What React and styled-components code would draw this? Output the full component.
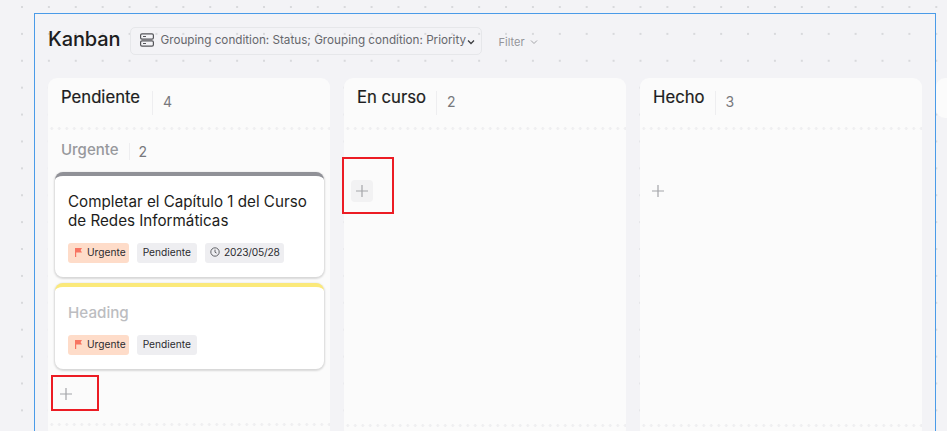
import React from 'react';
import styled, { createGlobalStyle } from 'styled-components';

const GlobalStyle = createGlobalStyle`
  html, body {
    margin: 0;
    height: 100%;
    overflow: hidden;
  }
  body {
    font-family: Inter, "Liberation Sans", sans-serif;
    background-color: #f3f3f6;
    background-image: radial-gradient(circle at 1px 1px, #d8d9dc 1px, transparent 1.3px);
    background-size: 26.9px 26.9px;
    background-position: 21px 6px;
  }
`;

const Page = styled.div`
  width: 947px;
  height: 431px;
  overflow: hidden;
  padding: 13px 0 0 34px;
  box-sizing: border-box;
`;

const Frame = styled.div`
  width: 902px;
  height: 440px;
  box-sizing: border-box;
  border: 1px solid #4a9be8;
  padding: 0 0 0 13px;
`;

const Toolbar = styled.div`
  display: flex;
  align-items: center;
  height: 53px;
  margin-bottom: 11px;
`;

const PageTitle = styled.h1`
  margin: 0 9px 0 0;
  font-size: 20px;
  line-height: 24px;
  font-weight: 500;
  letter-spacing: -0.1px;
  color: #1d1d20;
  position: relative;
  top: -2px;
`;

const GroupButton = styled.div`
  display: flex;
  align-items: center;
  width: 352px;
  height: 28px;
  box-sizing: border-box;
  padding: 0 0 1px 9px;
  border: 1px solid #e6e7ea;
  border-radius: 5px;
  font-size: 11.7px;
  color: #66676c;
  white-space: nowrap;
`;

const GroupIcon = styled.svg`
  width: 14px;
  height: 14px;
  margin-right: 7px;
  flex: none;
`;

const ButtonChevron = styled.span`
  display: flex;
  margin: 3px 0 0 1px;
`;

const FilterButton = styled.div`
  display: flex;
  align-items: center;
  margin-left: 17px;
  font-size: 11px;
  color: #94959a;
  gap: 5px;
  position: relative;
  top: 1px;
`;

const Board = styled.div`
  display: flex;
  align-items: flex-start;
  gap: 14px;
`;

const Column = styled.section`
  flex: none;
  width: 282px;
  height: ${({ $height }) => $height || 360}px;
  box-sizing: border-box;
  background: #fbfbfb;
  border-radius: 9px;
  overflow: hidden;
`;

const ColumnHead = styled.div`
  display: flex;
  align-items: flex-start;
  height: 49px;
  box-sizing: border-box;
  padding: 9px 0 0 13px;
`;

const ColumnName = styled.span`
  font-size: 16.7px;
  line-height: 20px;
  font-weight: 400;
  -webkit-text-stroke: 0.2px #1d1d20;
  color: #1d1d20;
`;

const Count = styled.span`
  margin: 4px 0 0 ${({ $gap }) => $gap || 10}px;
  padding: 1px 0 0 10px;
  height: 24px;
  border-left: 1px solid #eeeef0;
  font-size: 14px;
  line-height: 20px;
  color: #77787c;
  box-sizing: border-box;
`;

const DotRule = styled.div`
  height: 3px;
  margin-top: ${({ $top }) => $top || 0}px;
  background-image: radial-gradient(circle, #efeff1 1.3px, transparent 1.6px);
  background-size: 7.5px 3px;
`;

const GroupHead = styled.div`
  display: flex;
  align-items: flex-start;
  height: 42px;
  box-sizing: border-box;
  padding: 10px 0 0 13px;
`;

const GroupName = styled.span`
  font-size: 15px;
  line-height: 20px;
  font-weight: 500;
  color: #97989c;
`;

const GroupCount = styled(Count)`
  margin: 3px 0 0 10px;
  padding: 0 0 0 9px;
  height: 17px;
  line-height: 17px;
`;

const Cards = styled.div`
  display: flex;
  flex-direction: column;
  gap: 6px;
  padding: 0 6px 0 7px;
`;

const Card = styled.article`
  box-sizing: border-box;
  height: ${({ $height }) => $height}px;
  padding: 16px 13px 0;
  background: #fff;
  border-top: 4px solid ${({ $accent }) => $accent};
  border-radius: 8px;
  box-shadow: 0 1px 2px 1px rgba(0, 0, 0, 0.14);
`;

const CardTitle = styled.h3`
  margin: 0;
  font-size: 15.2px;
  line-height: 19px;
  color: ${({ $muted }) => ($muted ? '#bcbdc1' : '#1d1d20')};
  font-weight: ${({ $muted }) => ($muted ? 500 : 400)};
`;

const Tags = styled.div`
  display: flex;
  gap: 8px;
  margin-top: 13px;
`;

const Tag = styled.span`
  display: flex;
  align-items: center;
  gap: 4px;
  height: 20px;
  box-sizing: border-box;
  padding: 0 6px 3px;
  border-radius: 3px;
  font-size: 10.2px;
  color: #2b2b2f;
  background: #eeeef1;
`;

const UrgentTag = styled(Tag)`
  padding: 0 3px 3px 6px;
  background: #fedcc9;
`;

const DateTag = styled(Tag)`
  padding: 0 4px 3px 5px;
  letter-spacing: -0.2px;
`;

const AddButton = styled.button`
  display: flex;
  align-items: center;
  justify-content: center;
  width: 22px;
  height: 22px;
  padding: 0;
  border: 0;
  border-radius: 4px;
  background: ${({ $active }) => ($active ? '#f2f2f3' : 'transparent')};
`;

const AddSlot = styled.div`
  padding: ${({ $top }) => $top}px 0 0 7px;
`;

const AddHighlight = styled.div`
  position: absolute;
  box-sizing: border-box;
  border: 2px solid #ec1c24;
  left: ${({ $left }) => $left}px;
  top: ${({ $top }) => $top}px;
  width: ${({ $width }) => $width}px;
  height: ${({ $height }) => $height}px;
`;

const Plus = () => (
  <svg width="14" height="14" viewBox="0 0 14 14" fill="none">
    <path d="M7 1v12M1 7h12" stroke="#a4a5a9" strokeWidth="1.2" />
  </svg>
);

const Chevron = ({ color, weight = 1 }) => (
  <svg width="8" height="8" viewBox="0 0 8 8" fill="none">
    <path d="M1 2.5 4 5.5l3-3" stroke={color} strokeWidth={weight} />
  </svg>
);

const Flag = () => (
  <svg width="9" height="10" viewBox="0 0 9 10">
    <path d="M1 1h7L6.6 3.2 8 5.4H2.2V10H1z" fill="#f77462" />
  </svg>
);

const Clock = () => (
  <svg width="10" height="10" viewBox="0 0 10 10" fill="none" stroke="#55565a" strokeWidth="0.9">
    <circle cx="5" cy="5" r="4.2" />
    <path d="M5 2.6V5.2l1.6.9" />
  </svg>
);

const App = () => (
  <Page>
    <GlobalStyle />
    <Frame>
      <Toolbar>
        <PageTitle>Kanban</PageTitle>
        <GroupButton>
          <GroupIcon viewBox="0 0 14 14" fill="none" stroke="#55565a" strokeWidth="1.2">
            <rect x="0.6" y="0.8" width="12.8" height="5.4" rx="1.4" />
            <rect x="0.6" y="7.8" width="12.8" height="5.4" rx="1.4" />
            <path d="M3 3.5h3M3 10.5h3" />
          </GroupIcon>
          Grouping condition: Status; Grouping condition: Priority
          <ButtonChevron>
            <Chevron color="#3b3c40" weight={1.3} />
          </ButtonChevron>
        </GroupButton>
        <FilterButton>
          Filter
          <Chevron color="#a4a5a9" />
        </FilterButton>
      </Toolbar>
      <Board>
        <Column>
          <ColumnHead>
            <ColumnName>Pendiente</ColumnName>
            <Count $gap={12}>4</Count>
          </ColumnHead>
          <DotRule />
          <GroupHead>
            <GroupName>Urgente</GroupName>
            <GroupCount>2</GroupCount>
          </GroupHead>
          <Cards>
            <Card $accent="#909197" $height={105}>
              <CardTitle>Completar el Capítulo 1 del Curso de Redes Informáticas</CardTitle>
              <Tags>
                <UrgentTag><Flag />Urgente</UrgentTag>
                <Tag>Pendiente</Tag>
                <DateTag><Clock />2023/05/28</DateTag>
              </Tags>
            </Card>
            <Card $accent="#fbe97a" $height={86}>
              <CardTitle $muted>Heading</CardTitle>
              <Tags>
                <UrgentTag><Flag />Urgente</UrgentTag>
                <Tag>Pendiente</Tag>
              </Tags>
            </Card>
          </Cards>
          <AddSlot $top={14}>
            <AddButton><Plus /></AddButton>
          </AddSlot>
          <DotRule $top={18} />
        </Column>
        <Column>
          <ColumnHead>
            <ColumnName>En curso</ColumnName>
            <Count>2</Count>
          </ColumnHead>
          <DotRule />
          <AddSlot $top={50}>
            <AddButton $active><Plus /></AddButton>
          </AddSlot>
          <DotRule $top={222} />
        </Column>
        <Column>
          <ColumnHead>
            <ColumnName>Hecho</ColumnName>
            <Count>3</Count>
          </ColumnHead>
          <DotRule />
          <AddSlot $top={50}>
            <AddButton><Plus /></AddButton>
          </AddSlot>
          <DotRule $top={222} />
        </Column>
        <Column $height={40} />
      </Board>
    </Frame>
    <AddHighlight $left={342} $top={157} $width={52} $height={57} />
    <AddHighlight $left={51} $top={375} $width={48} $height={36} />
  </Page>
);

export default App;
